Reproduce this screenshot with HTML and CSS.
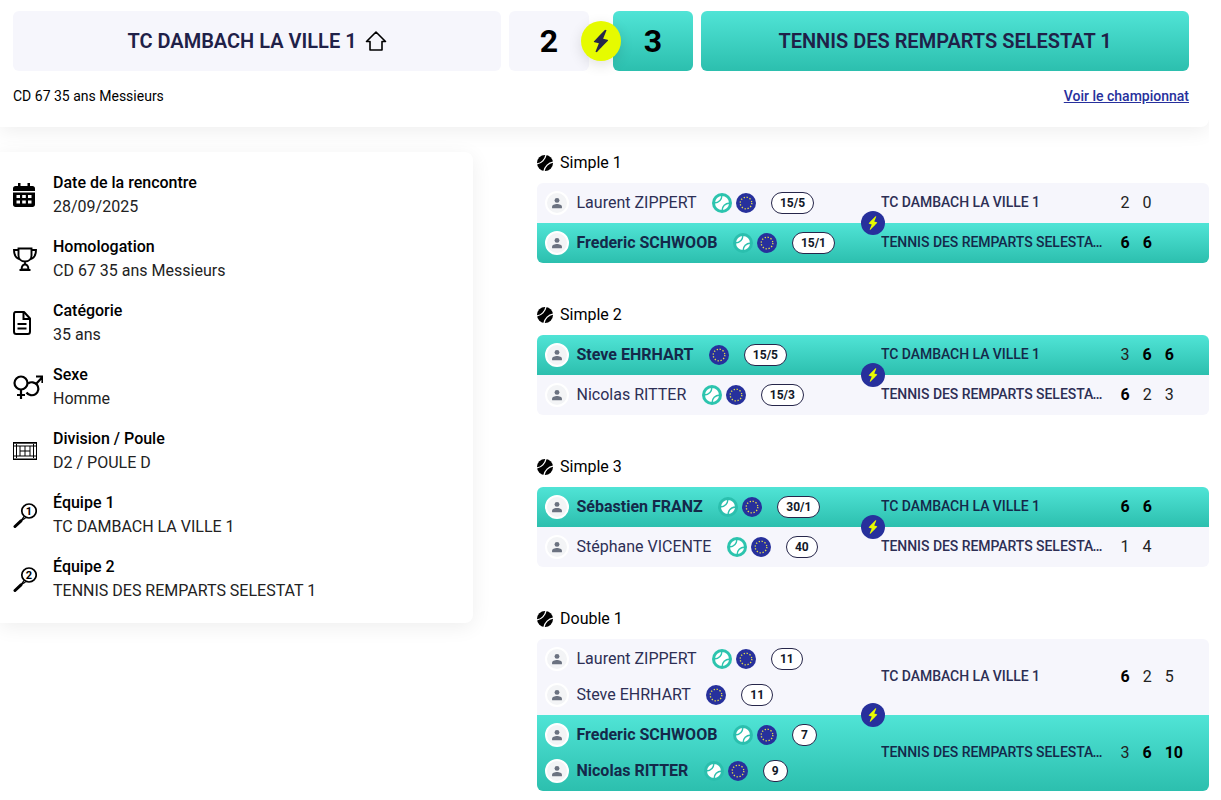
FILE: index.html
```html
<!DOCTYPE html>
<html lang="fr">
<head>
    <meta charset="UTF-8">
    <meta name="viewport" content="width=device-width, initial-scale=1.0">
    <title>Rencontre</title>
    <link rel="stylesheet" href="styles.css">
</head>
<body>
    <svg class="sprites" width="0" height="0" aria-hidden="true">
        <symbol id="bolt" viewBox="0 0 24 24">
            <path fill="currentColor" transform="rotate(14 12 12)" d="M11 21.500h-1.200l1-7.300H7.200c-.7 0-.7-.4-.5-.8l.1-.2C8.300 10.600 10.400 7 13 2.500h1.200l-1 7.300h3.600c.6 0 .7.400.5.700l-.1.200C13 17.800 11 21.500 11 21.500z"/>
        </symbol>
        <symbol id="person" viewBox="0 0 24 24">
            <circle cx="12" cy="7.500" r="4.200" fill="currentColor"/>
            <path fill="currentColor" d="M3.500 20v-1.500C3.500 15 8 13.500 12 13.500s8.500 1.500 8.500 5V20c0 .6-.4 1-1 1h-15c-.6 0-1-.4-1-1z"/>
        </symbol>
        <symbol id="ball" viewBox="0 0 20 20">
            <circle cx="10" cy="10" r="7" fill="#fff"/>
            <path fill="none" stroke="currentColor" stroke-width="1.400" transform="rotate(45 10 10)" d="M4.500 4.500C7.500 8 7.500 12 4.500 15.500M15.500 4.500C12.500 8 12.500 12 15.500 15.500"/>
        </symbol>
        <symbol id="flag" viewBox="0 0 20 20">
            <circle cx="10" cy="10" r="10" fill="#27309c"/>
            <circle cx="10" cy="10" r="5.800" fill="none" stroke="#e3dc4a" stroke-width="1.300" stroke-dasharray="1.300 1.730"/>
        </symbol>
        <symbol id="blackball" viewBox="0 0 16 16">
            <circle cx="8" cy="8" r="8" fill="#000"/>
            <path fill="none" stroke="#fff" stroke-width="1.300" transform="rotate(45 8 8)" d="M2.500 1C5.800 5 5.800 11 2.500 15M13.500 1C10.200 5 10.200 11 13.500 15"/>
        </symbol>
        <symbol id="racket" viewBox="0 0 24 28">
            <ellipse cx="16" cy="10" rx="7.200" ry="7" fill="none" stroke="#000" stroke-width="1.700"/>
            <path fill="none" stroke="#000" stroke-width="3" stroke-linecap="round" d="M2 25.500 8 19.800"/>
            <path fill="none" stroke="#000" stroke-width="1.300" d="M8 19.800 11 15.500M8 19.800 12.500 17"/>
        </symbol>
    </svg>

    <div class="page">
        <section class="head-card">
            <div class="teams">
                <div class="team-box">
                    TC DAMBACH LA VILLE 1
                    <svg class="home-icon" viewBox="0 0 22 22"><path fill="none" stroke="#000" stroke-width="1.600" stroke-linejoin="round" d="M11 2 1.500 11.500h3.500V20h12v-8.500h3.500z"/></svg>
                </div>
                <div class="score-box">2</div>
                <div class="score-box score-box-win">3</div>
                <div class="team-box team-box-win">TENNIS DES REMPARTS SELESTAT 1</div>
                <div class="versus"><svg width="30" height="30"><use href="#bolt"/></svg></div>
            </div>
            <div class="head-foot">
                <span>CD 67 35 ans Messieurs</span>
                <a href="#" class="champ-link">Voir le championnat</a>
            </div>
        </section>

        <div class="columns">
            <aside class="info-card">
                <div class="info-item">
                    <svg class="info-icon" viewBox="0 0 22 24"><path d="M5 0h2.500v3h7V0H17v3h2.500C21 3 22 4 22 5.500V8H0V5.500C0 4 1 3 2.500 3H5z"/><path fill-rule="evenodd" d="M0 9.500h22v12c0 1.500-1 2.500-2.500 2.500h-17C1 24 0 23 0 21.500zM3.500 12v3h3.500v-3zm5.700 0v3h3.600v-3zm5.800 0v3h3.500v-3zM3.500 17.500v3h3.500v-3zm5.700 0v3h3.600v-3zm5.800 0v3h3.500v-3z"/></svg>
                    <div><div class="info-label">Date de la rencontre</div><div>28/09/2025</div></div>
                </div>
                <div class="info-item">
                    <svg class="info-icon info-icon-large" viewBox="0 0 24 24"><path fill="none" stroke="#000" stroke-width="1.900" d="M5.500 1.500h13v7c0 3.500-2.800 6-6.500 6s-6.500-2.500-6.500-6zM5.500 3H1c0 5 1.500 8.500 6.500 9.500M18.500 3H23c0 5-1.500 8.500-6.500 9.500M12 14.500v3M8.500 22.500c.2-3 1.500-5 3.500-5s3.300 2 3.500 5zM6.500 23h11"/></svg>
                    <div><div class="info-label">Homologation</div><div>CD 67 35 ans Messieurs</div></div>
                </div>
                <div class="info-item">
                    <svg class="info-icon" viewBox="0 0 22 24" preserveAspectRatio="xMinYMid"><path fill="none" stroke="#000" stroke-width="2" stroke-linejoin="round" d="M2.500 1H11l6 6.500v13c0 1.400-.8 2.500-2.200 2.500H3.200C1.800 23 1 22 1 20.500v-17C1 2 1.500 1 2.500 1z"/><path fill="none" stroke="#000" stroke-width="2" d="M10.500 1.500V8H17M4.500 13h9M4.500 17.500h9"/></svg>
                    <div><div class="info-label">Catégorie</div><div>35 ans</div></div>
                </div>
                <div class="info-item">
                    <svg class="info-icon info-icon-wide" viewBox="0 0 30 24"><g fill="none" stroke="#000" stroke-width="2.200"><circle cx="8" cy="8" r="6.500"/><path d="M8 14.500V24M4 20h8M15 8.500A6.500 6.500 0 1 1 13.500 17.500M23.500 8.500 29 2.500M23 1.500h6.500V8"/></g></svg>
                    <div><div class="info-label">Sexe</div><div>Homme</div></div>
                </div>
                <div class="info-item">
                    <svg class="info-icon info-icon-large" viewBox="0 0 24 18"><rect width="24" height="18" fill="#000"/><rect x="1" y="1.700" width="22" height="14.800" fill="#fff"/><path fill="none" stroke="#000" stroke-width="1" d="M1 4h22M1 14h22M7 4v10M17 4v10M12 4v10M7 9h10M3.500 2v14M20.500 2v14"/></svg>
                    <div><div class="info-label">Division / Poule</div><div>D2 / POULE D</div></div>
                </div>
                <div class="info-item">
                    <svg class="info-icon-racket" viewBox="0 0 24 28"><use href="#racket"/><text x="16" y="13.800" class="racket-num">1</text></svg>
                    <div><div class="info-label">Équipe 1</div><div>TC DAMBACH LA VILLE 1</div></div>
                </div>
                <div class="info-item">
                    <svg class="info-icon-racket" viewBox="0 0 24 28"><use href="#racket"/><text x="16" y="13.800" class="racket-num">2</text></svg>
                    <div><div class="info-label">Équipe 2</div><div>TENNIS DES REMPARTS SELESTAT 1</div></div>
                </div>
            </aside>

            <main class="matches">
                <section class="match-block">
                    <h2 class="match-title"><svg width="16" height="16"><use href="#blackball"/></svg>Simple 1</h2>
                    <div class="match">
                        <div class="side">
                            <div class="players">
                                <div class="player"><span class="avatar"><svg width="14" height="14"><use href="#person"/></svg></span><span class="name">Laurent ZIPPERT</span><span class="badges"><svg class="badge-ball" width="20" height="20"><use href="#ball"/></svg><svg width="20" height="20"><use href="#flag"/></svg></span><span class="rank">15/5</span></div>
                            </div>
                            <div class="team-name">TC DAMBACH LA VILLE 1</div>
                            <div class="scores"><span>2</span><span>0</span></div>
                        </div>
                        <div class="side side-win">
                            <div class="players">
                                <div class="player"><span class="avatar"><svg width="14" height="14"><use href="#person"/></svg></span><span class="name">Frederic SCHWOOB</span><span class="badges"><svg class="badge-ball" width="20" height="20"><use href="#ball"/></svg><svg width="20" height="20"><use href="#flag"/></svg></span><span class="rank">15/1</span></div>
                            </div>
                            <div class="team-name">TENNIS DES REMPARTS SELESTAT 1</div>
                            <div class="scores"><span class="won">6</span><span class="won">6</span></div>
                        </div>
                        <div class="match-bolt"><svg width="18" height="18"><use href="#bolt"/></svg></div>
                    </div>
                </section>

                <section class="match-block">
                    <h2 class="match-title"><svg width="16" height="16"><use href="#blackball"/></svg>Simple 2</h2>
                    <div class="match">
                        <div class="side side-win">
                            <div class="players">
                                <div class="player"><span class="avatar"><svg width="14" height="14"><use href="#person"/></svg></span><span class="name">Steve EHRHART</span><span class="badges"><svg width="20" height="20"><use href="#flag"/></svg></span><span class="rank">15/5</span></div>
                            </div>
                            <div class="team-name">TC DAMBACH LA VILLE 1</div>
                            <div class="scores"><span>3</span><span class="won">6</span><span class="won">6</span></div>
                        </div>
                        <div class="side">
                            <div class="players">
                                <div class="player"><span class="avatar"><svg width="14" height="14"><use href="#person"/></svg></span><span class="name">Nicolas RITTER</span><span class="badges"><svg class="badge-ball" width="20" height="20"><use href="#ball"/></svg><svg width="20" height="20"><use href="#flag"/></svg></span><span class="rank">15/3</span></div>
                            </div>
                            <div class="team-name">TENNIS DES REMPARTS SELESTAT 1</div>
                            <div class="scores"><span class="won">6</span><span>2</span><span>3</span></div>
                        </div>
                        <div class="match-bolt"><svg width="18" height="18"><use href="#bolt"/></svg></div>
                    </div>
                </section>

                <section class="match-block">
                    <h2 class="match-title"><svg width="16" height="16"><use href="#blackball"/></svg>Simple 3</h2>
                    <div class="match">
                        <div class="side side-win">
                            <div class="players">
                                <div class="player"><span class="avatar"><svg width="14" height="14"><use href="#person"/></svg></span><span class="name">Sébastien FRANZ</span><span class="badges"><svg class="badge-ball" width="20" height="20"><use href="#ball"/></svg><svg width="20" height="20"><use href="#flag"/></svg></span><span class="rank">30/1</span></div>
                            </div>
                            <div class="team-name">TC DAMBACH LA VILLE 1</div>
                            <div class="scores"><span class="won">6</span><span class="won">6</span></div>
                        </div>
                        <div class="side">
                            <div class="players">
                                <div class="player"><span class="avatar"><svg width="14" height="14"><use href="#person"/></svg></span><span class="name">Stéphane VICENTE</span><span class="badges"><svg class="badge-ball" width="20" height="20"><use href="#ball"/></svg><svg width="20" height="20"><use href="#flag"/></svg></span><span class="rank">40</span></div>
                            </div>
                            <div class="team-name">TENNIS DES REMPARTS SELESTAT 1</div>
                            <div class="scores"><span>1</span><span>4</span></div>
                        </div>
                        <div class="match-bolt"><svg width="18" height="18"><use href="#bolt"/></svg></div>
                    </div>
                </section>

                <section class="match-block">
                    <h2 class="match-title"><svg width="16" height="16"><use href="#blackball"/></svg>Double 1</h2>
                    <div class="match">
                        <div class="side side-double">
                            <div class="players">
                                <div class="player"><span class="avatar"><svg width="14" height="14"><use href="#person"/></svg></span><span class="name">Laurent ZIPPERT</span><span class="badges"><svg class="badge-ball" width="20" height="20"><use href="#ball"/></svg><svg width="20" height="20"><use href="#flag"/></svg></span><span class="rank">11</span></div>
                                <div class="player"><span class="avatar"><svg width="14" height="14"><use href="#person"/></svg></span><span class="name">Steve EHRHART</span><span class="badges"><svg width="20" height="20"><use href="#flag"/></svg></span><span class="rank">11</span></div>
                            </div>
                            <div class="team-name">TC DAMBACH LA VILLE 1</div>
                            <div class="scores"><span class="won">6</span><span>2</span><span>5</span></div>
                        </div>
                        <div class="side side-double side-win">
                            <div class="players">
                                <div class="player"><span class="avatar"><svg width="14" height="14"><use href="#person"/></svg></span><span class="name">Frederic SCHWOOB</span><span class="badges"><svg class="badge-ball" width="20" height="20"><use href="#ball"/></svg><svg width="20" height="20"><use href="#flag"/></svg></span><span class="rank">7</span></div>
                                <div class="player"><span class="avatar"><svg width="14" height="14"><use href="#person"/></svg></span><span class="name">Nicolas RITTER</span><span class="badges"><svg class="badge-ball" width="20" height="20"><use href="#ball"/></svg><svg width="20" height="20"><use href="#flag"/></svg></span><span class="rank">9</span></div>
                            </div>
                            <div class="team-name">TENNIS DES REMPARTS SELESTAT 1</div>
                            <div class="scores"><span>3</span><span class="won">6</span><span class="won">10</span></div>
                        </div>
                        <div class="match-bolt"><svg width="18" height="18"><use href="#bolt"/></svg></div>
                    </div>
                </section>
            </main>
        </div>
    </div>
</body>
</html>
```
FILE: styles.css
```css
body {
    margin: 0;
    font-family: Roboto, "Liberation Sans", sans-serif;
    font-size: 16px;
    color: #000000;
    background-color: #ffffff;
}

.sprites {
    position: absolute;
}

.page {
    width: 1209px;
    height: 800px;
    overflow: hidden;
}

/* top card */
.head-card {
    padding: 11px 20px 0 13px;
    height: 116px;
    background-color: #ffffff;
    border-radius: 0 0 8px 0;
    box-shadow: 0 4px 20px rgba(0, 0, 0, 0.07);
}

.teams {
    position: relative;
    display: flex;
    height: 60px;
    gap: 8px;
}

.team-box {
    flex: 1;
    display: flex;
    align-items: center;
    justify-content: center;
    gap: 8px;
    font-size: 20px;
    font-weight: 600;
    color: #1f2148;
    background-color: #f6f6fc;
    border-radius: 6px;
}

.team-box-win,
.score-box-win,
.side-win {
    background: linear-gradient(180deg, #50e4d6 0%, #2cbfae 100%);
}

.home-icon {
    width: 22px;
    height: 22px;
}

.score-box {
    width: 80px;
    display: flex;
    align-items: center;
    justify-content: center;
    font-size: 32px;
    font-weight: 700;
    background-color: #f6f6fc;
    border-radius: 6px;
}

.score-box-win {
    margin-left: 16px;
    background: linear-gradient(180deg, #50e4d6 0%, #2cbfae 100%);
}

.versus {
    position: absolute;
    left: 568px;
    top: 10px;
    width: 40px;
    height: 40px;
    display: flex;
    align-items: center;
    justify-content: center;
    border-radius: 50%;
    color: #26264a;
    background-color: #e6fb00;
    box-shadow: 0 4px 14px rgba(0, 0, 0, 0.12);
}

.head-foot {
    display: flex;
    justify-content: space-between;
    margin-top: 17px;
    font-size: 14px;
    line-height: 16px;
}

.champ-link {
    font-weight: 500;
    color: #27309c;
}

/* columns */
.columns {
    display: flex;
    align-items: flex-start;
    margin-top: 25px;
}

.info-card {
    width: 473px;
    height: 471px;
    box-sizing: border-box;
    flex-shrink: 0;
    padding: 19px 13px 0;
    background-color: #ffffff;
    border-radius: 0 8px 8px 0;
    box-shadow: 0 4px 20px rgba(0, 0, 0, 0.07);
    display: flex;
    flex-direction: column;
    gap: 16px;
}

.info-item {
    display: flex;
    align-items: center;
    gap: 18px;
    line-height: 24px;
    font-size: 16px;
    color: #222222;
}

.info-label {
    font-weight: 500;
    color: #000000;
}

.info-icon {
    width: 22px;
    height: 24px;
    flex-shrink: 0;
}

.info-icon-large {
    width: 24px;
    margin-right: -2px;
}

.info-icon-wide {
    width: 30px;
    margin-right: -8px;
}

.info-icon-racket {
    width: 24px;
    height: 28px;
    flex-shrink: 0;
    margin-right: -2px;
}

.racket-num {
    font-family: Roboto, "Liberation Sans", sans-serif;
    font-size: 11px;
    font-weight: 700;
    text-anchor: middle;
}

.matches {
    width: 672px;
    margin-left: 64px;
}

.match-block {
    height: 152px;
}

.match-title {
    display: flex;
    align-items: center;
    gap: 7px;
    margin: 0 0 9px;
    font-size: 16px;
    font-weight: 400;
    line-height: 22px;
}

.match {
    position: relative;
    border-radius: 6px;
    overflow: hidden;
}

.side {
    display: flex;
    align-items: center;
    height: 40px;
    color: #2d2f55;
    background-color: #f6f6fc;
}

.side-double {
    height: 76px;
}

.side-win {
    color: #14294a;
    background: linear-gradient(180deg, #50e4d6 0%, #2cbfae 100%);
}

.players {
    width: 344px;
    flex-shrink: 0;
    padding-left: 8px;
    box-sizing: border-box;
    display: flex;
    flex-direction: column;
    gap: 12px;
}

.player {
    display: flex;
    align-items: center;
    height: 24px;
}

.avatar {
    width: 24px;
    height: 24px;
    display: flex;
    align-items: center;
    justify-content: center;
    box-sizing: border-box;
    border: 2px solid #ffffff;
    border-radius: 50%;
    color: #6b7280;
    background-color: #f3f4f6;
}

.name {
    margin-left: 7.5px;
    padding-bottom: 2px;
    font-size: 16px;
}

.side-win .name {
    font-weight: 700;
}

.badges {
    display: flex;
    gap: 4px;
    margin-left: 15.5px;
}

.badge-ball {
    color: #2cc4ae;
    background-color: #2cc4ae;
    border-radius: 50%;
}

.side-win .badge-ball {
    color: #2bbfae;
    background-color: #2bbfae;
}

.rank {
    margin-left: 15px;
    min-width: 24px;
    height: 22px;
    padding: 0 8px;
    box-sizing: border-box;
    display: flex;
    align-items: center;
    justify-content: center;
    font-size: 12px;
    font-weight: 700;
    color: #111827;
    background-color: #ffffff;
    border: 1px solid #26264a;
    border-radius: 11px;
}

.team-name {
    width: 226px;
    flex-shrink: 0;
    padding-bottom: 2px;
    font-size: 14px;
    font-weight: 500;
    letter-spacing: -0.05px;
    white-space: nowrap;
    overflow: hidden;
    text-overflow: ellipsis;
}

.scores {
    display: flex;
    gap: 13px;
    margin-left: 13.5px;
    padding-bottom: 2px;
    color: #222222;
}

.scores .won {
    font-weight: 700;
    color: #000000;
}

.match-bolt {
    position: absolute;
    left: 324px;
    top: 50%;
    width: 24px;
    height: 24px;
    margin-top: -12px;
    display: flex;
    align-items: center;
    justify-content: center;
    border-radius: 50%;
    color: #e6fb00;
    background-color: #27309c;
}
```
